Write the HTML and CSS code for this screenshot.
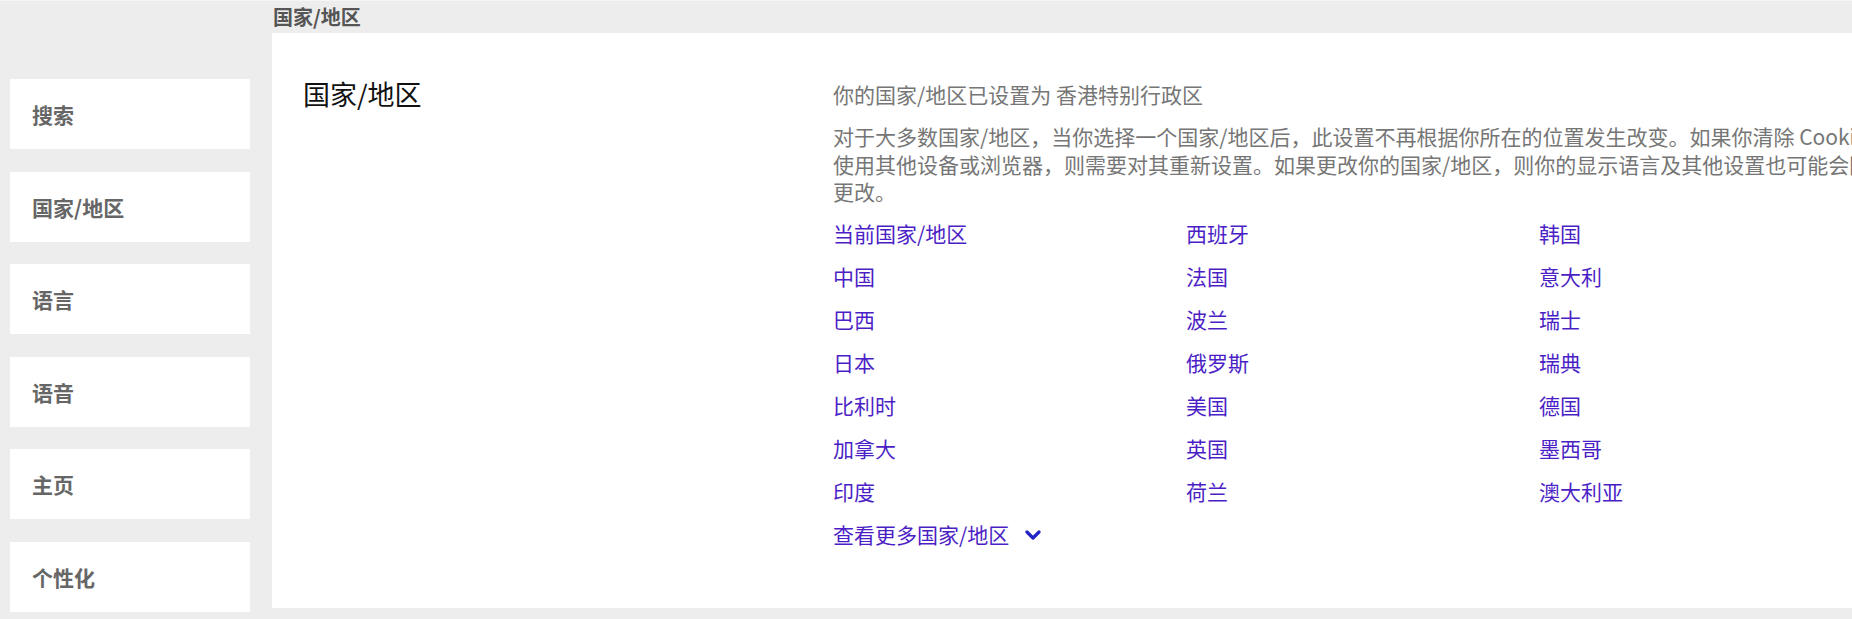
FILE: index.html
```html
<!DOCTYPE html>
<html lang="zh-CN">
<head>
    <meta charset="UTF-8">
    <meta name="viewport" content="width=device-width, initial-scale=1.0">
    <title>设置 - 国家/地区</title>
    <link rel="stylesheet" href="styles.css">
</head>
<body>
    <div class="breadcrumb">国家/地区</div>

    <div class="layout">
        <nav class="side-nav">
            <a class="nav-card" href="#">搜索</a>
            <a class="nav-card" href="#">国家/地区</a>
            <a class="nav-card" href="#">语言</a>
            <a class="nav-card" href="#">语音</a>
            <a class="nav-card" href="#">主页</a>
            <a class="nav-card" href="#">个性化</a>
        </nav>

        <main class="panel">
            <h1 class="panel-title">国家/地区</h1>

            <div class="panel-body">
                <div class="current-region">你的国家/地区已设置为 香港特别行政区</div>
                <p class="region-note">
                    对于大多数国家/地区，当你选择一个国家/地区后，此设置不再根据你所在的位置发生改变。如果你清除 Cookie 或<br>
                    使用其他设备或浏览器，则需要对其重新设置。如果更改你的国家/地区，则你的显示语言及其他设置也可能会随之<br>
                    更改。
                </p>

                <ul class="region-list">
                    <li><a href="#">当前国家/地区</a></li>
                    <li><a href="#">西班牙</a></li>
                    <li><a href="#">韩国</a></li>
                    <li><a href="#">中国</a></li>
                    <li><a href="#">法国</a></li>
                    <li><a href="#">意大利</a></li>
                    <li><a href="#">巴西</a></li>
                    <li><a href="#">波兰</a></li>
                    <li><a href="#">瑞士</a></li>
                    <li><a href="#">日本</a></li>
                    <li><a href="#">俄罗斯</a></li>
                    <li><a href="#">瑞典</a></li>
                    <li><a href="#">比利时</a></li>
                    <li><a href="#">美国</a></li>
                    <li><a href="#">德国</a></li>
                    <li><a href="#">加拿大</a></li>
                    <li><a href="#">英国</a></li>
                    <li><a href="#">墨西哥</a></li>
                    <li><a href="#">印度</a></li>
                    <li><a href="#">荷兰</a></li>
                    <li><a href="#">澳大利亚</a></li>
                </ul>

                <a class="more-link" href="#">
                    查看更多国家/地区
                    <svg class="chevron" width="16" height="10" viewBox="0 0 16 10">
                        <path d="M2 2 L8 8 L14 2" fill="none" stroke="#2323c6" stroke-width="3.2" stroke-linecap="round" stroke-linejoin="round"/>
                    </svg>
                </a>
            </div>
        </main>
    </div>
</body>
</html>
```

FILE: styles.css
```css
* {
    margin: 0;
    padding: 0;
    box-sizing: border-box;
}

body {
    font-family: "Noto Sans CJK SC", "Noto Sans", sans-serif;
    background-color: #ededed;
    border-top: 1px solid #f6f6f6;
    height: 619px;
    overflow: hidden;
}

a {
    text-decoration: none;
}

.breadcrumb {
    height: 32px;
    line-height: 32px;
    padding-left: 273px;
    font-size: 20px;
    font-weight: 700;
    color: #555;
}

.layout {
    display: flex;
    gap: 22px;
    padding-left: 10px;
}

/* left settings menu */
.side-nav {
    width: 240px;
    flex-shrink: 0;
    display: flex;
    flex-direction: column;
    gap: 22.6px;
    padding-top: 46px;
}

.nav-card {
    display: flex;
    align-items: center;
    height: 70px;
    padding-left: 22px;
    background: white;
    font-size: 21px;
    font-weight: 700;
    color: #666;
}

/* main content */
.panel {
    flex: 1;
    height: 575px;
    background: white;
    display: flex;
    padding: 47px 0 0 31px;
    overflow: hidden;
}

.panel-title {
    width: 530px;
    flex-shrink: 0;
    font-size: 27px;
    font-weight: 400;
    line-height: 28px;
    color: #111;
}

.panel-body {
    width: 1080px;
    flex-shrink: 0;
    font-size: 21px;
}

.current-region {
    line-height: 28px;
    color: #767676;
}

.region-note {
    margin-top: 15px;
    line-height: 27.5px;
    color: #767676;
    white-space: nowrap;
}

.region-list {
    list-style: none;
    display: grid;
    grid-template-columns: repeat(3, 353px);
    margin-top: 6px;
}

.region-list li {
    height: 43px;
    line-height: 43px;
}

.region-list a,
.more-link {
    color: #4c1fc6;
}

.more-link {
    display: inline-flex;
    align-items: center;
    height: 43px;
}

.chevron {
    margin-left: 16px;
    margin-top: 1px;
}
```
